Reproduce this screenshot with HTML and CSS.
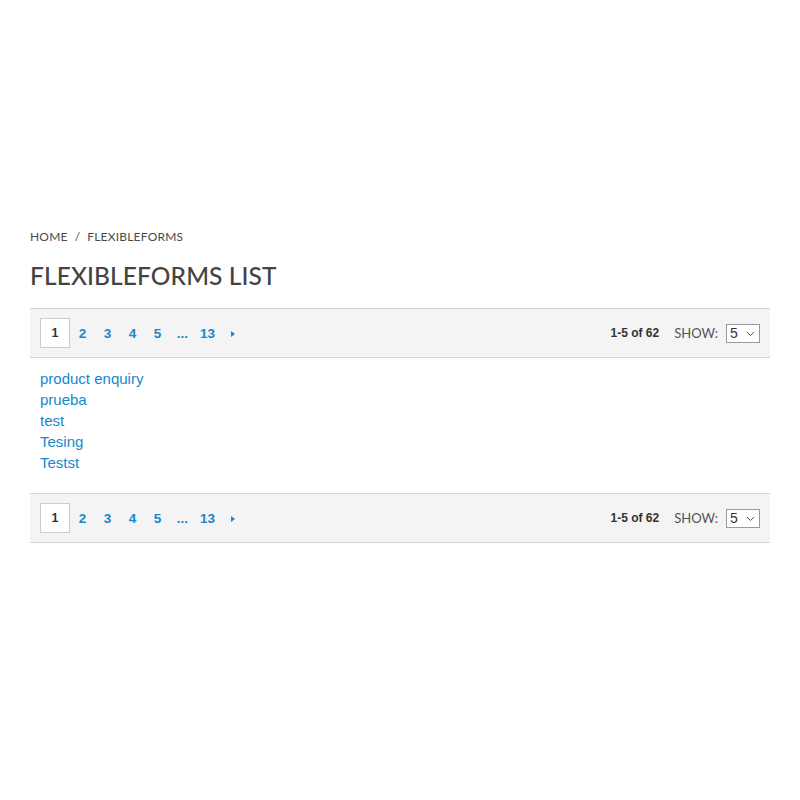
FILE: index.html
```html
<!DOCTYPE html>
<html>
<head>
<meta charset="utf-8">
<link rel="stylesheet" href="styles.css">
</head>
<body>
<div class="page">
  <nav class="breadcrumb"><span>HOME</span><span class="sep">/</span><span>FLEXIBLEFORMS</span></nav>
  <h1 class="title">FLEXIBLEFORMS LIST</h1>

  <div class="toolbar">
    <div class="pages">
      <span class="current">1</span>
      <a class="pg">2</a>
      <a class="pg">3</a>
      <a class="pg">4</a>
      <a class="pg">5</a>
      <a class="pg">...</a>
      <a class="pg">13</a>
      <a class="next"><span class="tri"></span></a>
    </div>
    <div class="right">
      <span class="count">1-5 of 62</span>
      <span class="show">SHOW:</span>
      <span class="select">5<svg class="chev" width="9" height="6" viewBox="0 0 9 6"><path d="M1 1 L4.5 4.5 L8 1" fill="none" stroke="#555" stroke-width="1"/></svg></span>
    </div>
  </div>

  <ul class="items">
    <li><a>product enquiry</a></li>
    <li><a>prueba</a></li>
    <li><a>test</a></li>
    <li><a>Tesing</a></li>
    <li><a>Testst</a></li>
  </ul>

  <div class="toolbar">
    <div class="pages">
      <span class="current">1</span>
      <a class="pg">2</a>
      <a class="pg">3</a>
      <a class="pg">4</a>
      <a class="pg">5</a>
      <a class="pg">...</a>
      <a class="pg">13</a>
      <a class="next"><span class="tri"></span></a>
    </div>
    <div class="right">
      <span class="count">1-5 of 62</span>
      <span class="show">SHOW:</span>
      <span class="select">5<svg class="chev" width="9" height="6" viewBox="0 0 9 6"><path d="M1 1 L4.5 4.5 L8 1" fill="none" stroke="#555" stroke-width="1"/></svg></span>
    </div>
  </div>
</div>
</body>
</html>
```
FILE: styles.css
```css
html, body {
  margin: 0;
  padding: 0;
  background: #fff;
}
body {
  font-family: "Liberation Sans", Arial, sans-serif;
  color: #333;
}
.page {
  width: 740px;
  margin-left: 30px;
  padding-top: 229px;
}
.breadcrumb {
  font-family: Lato, "Open Sans", sans-serif;
  font-size: 12px;
  line-height: 16px;
  color: #4a4a4a;
  letter-spacing: 0.2px;
}
.breadcrumb .sep {
  margin: 0 7px;
}
.title {
  font-family: Lato, "Open Sans", sans-serif;
  font-weight: 500;
  font-size: 24.5px;
  line-height: 30px;
  color: #444;
  margin: 16px 0 17px 0;
  letter-spacing: 0.1px;
}
.toolbar {
  display: flex;
  justify-content: space-between;
  align-items: center;
  background: #f4f4f4;
  border-top: 1px solid #d6d6d6;
  border-bottom: 1px solid #d6d6d6;
  padding: 9px 10px;
  height: 30px;
}
.pages {
  display: flex;
  align-items: center;
  font-size: 13.5px;
  font-weight: bold;
}
.current {
  display: inline-flex;
  width: 28px;
  height: 28px;
  align-items: center;
  justify-content: center;
  background: #fff;
  border: 1px solid #ccc;
  color: #333;
  font-weight: bold;
  font-size: 12.5px;
}
.pg {
  color: #1787cc;
  width: 25px;
  text-align: center;
  font-weight: bold;
}
.next {
  display: inline-flex;
  width: 25px;
  justify-content: center;
}
.tri {
  width: 0;
  height: 0;
  border-top: 3.5px solid transparent;
  border-bottom: 3.5px solid transparent;
  border-left: 4px solid #1787cc;
  margin-top: 1px;
}
.right {
  display: flex;
  align-items: center;
}
.count {
  font-size: 12px;
  font-weight: bold;
  color: #333;
  margin-right: 15px;
}
.show {
  font-family: Lato, "Open Sans", sans-serif;
  font-size: 13px;
  color: #555;
  margin-right: 8px;
}
.select {
  display: inline-flex;
  align-items: center;
  justify-content: space-between;
  box-sizing: border-box;
  width: 34px;
  height: 19px;
  background: #fff;
  border: 1px solid #999;
  padding: 0 4px 0 3px;
  font-size: 14px;
  color: #333;
}
.chev {
  margin-top: 1px;
}
.items {
  list-style: none;
  margin: 0;
  padding: 10px 10px 20px 10px;
}
.items li {
  font-size: 15px;
  line-height: 21px;
}
.items a {
  color: #1787cc;
}
```
